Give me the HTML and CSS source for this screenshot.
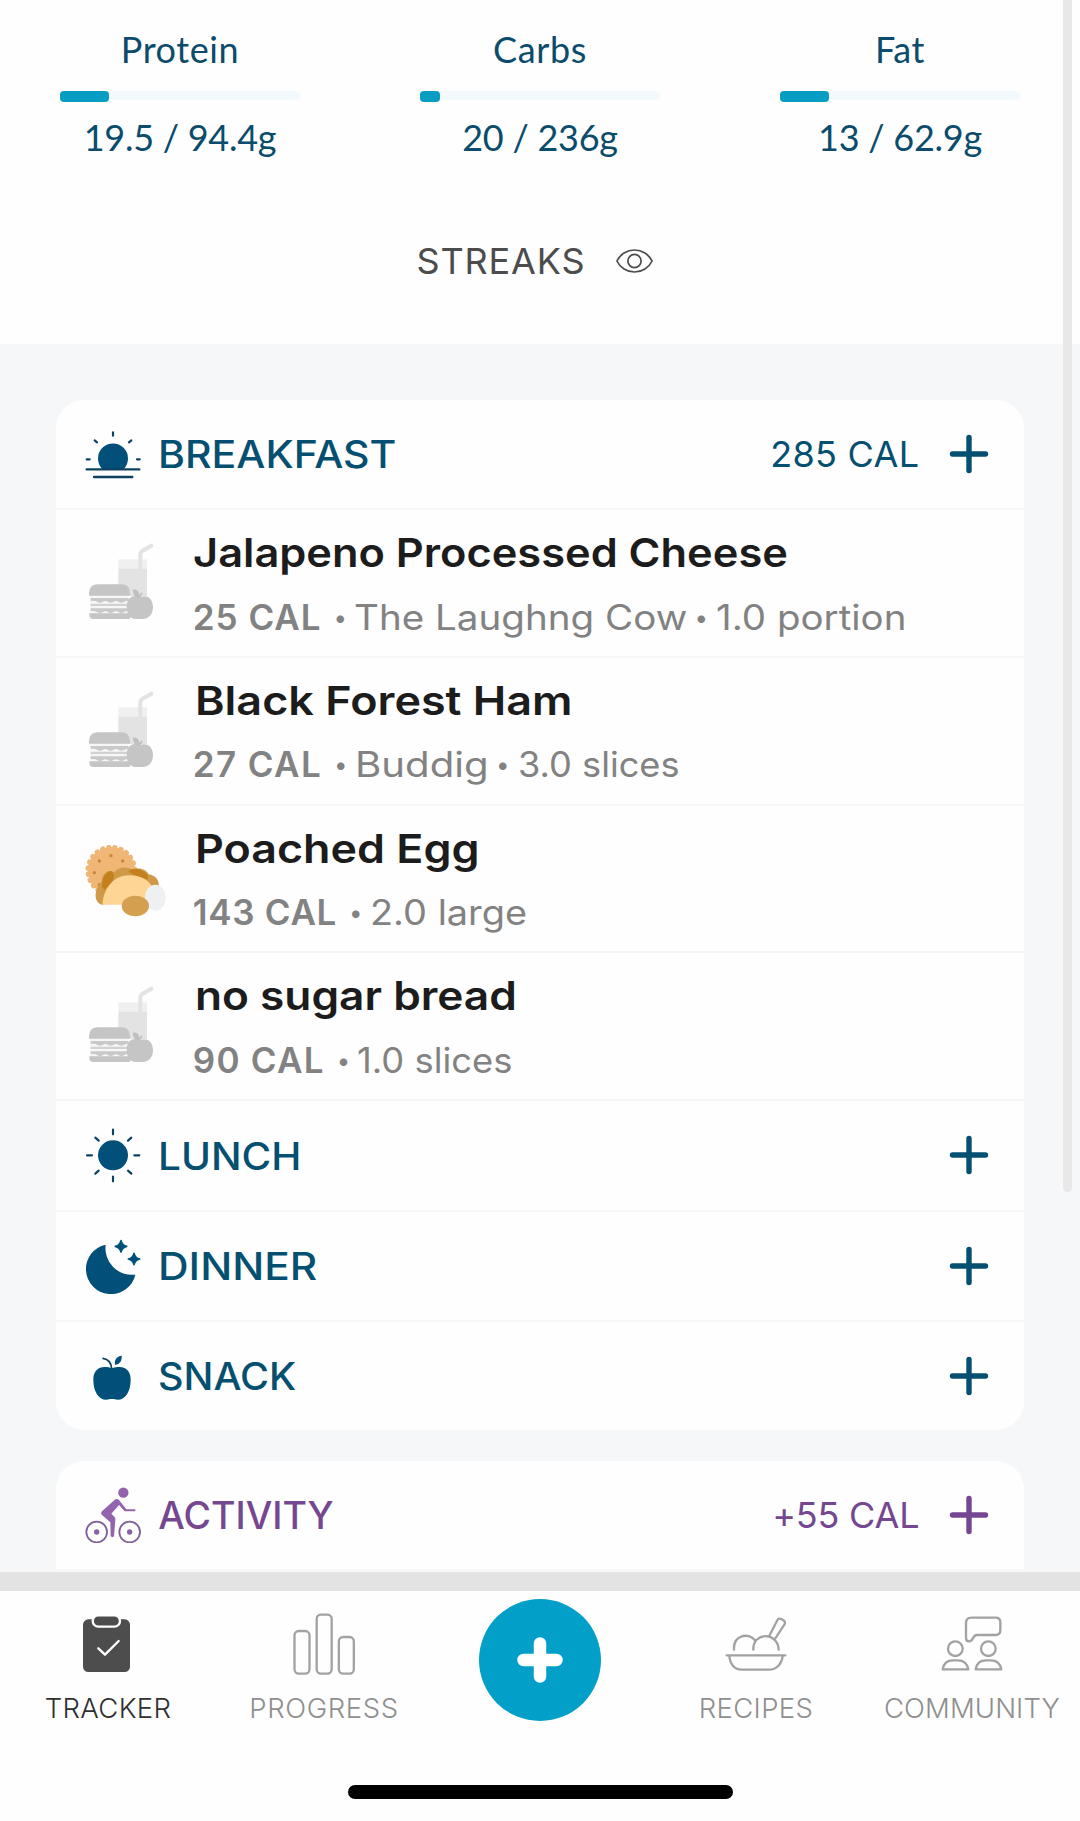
FILE: index.html
```html
<!DOCTYPE html>
<html lang="en">
<head>
<meta charset="utf-8">
<title>Tracker</title>
<link rel="stylesheet" href="styles.css">
</head>
<body>
<svg class="defs" aria-hidden="true">
  <symbol id="plus" viewBox="0 0 40 40"><path d="M20 3.5v33M3.5 20h33" fill="none" stroke="currentColor" stroke-width="5.4" stroke-linecap="round"/></symbol>
  <symbol id="meal" viewBox="0 0 252 252">
    <path fill="#f0f0f0" d="M103 55h86v30h-86z"/>
    <path fill="#e3e3e3" d="M103 83h86v82h-86z"/>
    <path fill="none" stroke="#e3e3e3" stroke-width="12" stroke-linecap="round" d="M169 80V42q0-9 7-13l26-15"/>
    <path fill="#f7f7f7" d="M18 160h116v70H18z"/>
    <path fill="#c5c5c5" d="M15 164v-7q0-27 27-27h69q27 0 27 27v7z"/>
    <path fill="#c9c9c9" d="M20 171h114v8q-9 0-14 4-8 5-16 0-8-6-16 0-8 5-16 0-8-6-16 0-8 5-16 0-8-6-20-3z"/>
    <path fill="#d2d2d2" d="M20 188h114v7H20z"/>
    <path fill="#c9c9c9" d="M20 202h114v8q-9 0-14 4-8 5-16 0-8-6-16 0-8 5-16 0-8-6-16 0-8 5-16 0-8-6-20-3z"/>
    <path fill="#c5c5c5" d="M16 217h122v17H28q-12 0-12-12z"/>
    <path fill="#c5c5c5" d="M168 168c24-8 39 8 39 30 0 24-14 36-32 36h-20c-16 0-27-14-27-36 0-26 16-40 40-30z"/>
    <path fill="#c0c0c0" d="M146 146c13-2 20 5 20 17l6-9 4 4-8 12c-13 1-20-7-22-24z"/>
  </symbol>
</svg>

<div class="screen">
  <main class="content">
    <section class="summary">
      <div class="macros">
        <div class="macro">
          <div class="macro__label">Protein</div>
          <div class="macro__track"><div class="macro__fill" style="width:20.6%"></div></div>
          <div class="macro__value">19.5 / 94.4g</div>
        </div>
        <div class="macro">
          <div class="macro__label">Carbs</div>
          <div class="macro__track"><div class="macro__fill" style="width:8.5%"></div></div>
          <div class="macro__value">20 / 236g</div>
        </div>
        <div class="macro">
          <div class="macro__label">Fat</div>
          <div class="macro__track"><div class="macro__fill" style="width:20.6%"></div></div>
          <div class="macro__value">13 / 62.9g</div>
        </div>
      </div>
      <div class="streaks">
        <span>STREAKS</span>
        <svg class="streaks__eye" viewBox="0 0 37 24" fill="none" stroke="#4c4c4c" stroke-width="1.7"><path d="M.9 12C4 5.500 11 1 18.500 1S33 5.500 36.100 12C33 18.500 26 23 18.500 23S4 18.500 .9 12z"/><circle cx="18.500" cy="12" r="6.600"/></svg>
      </div>
    </section>

    <section class="diary">
      <div class="card">
        <div class="meal meal--first">
          <svg class="meal__icon" viewBox="0 0 168 168">
            <path fill="#02507a" d="M52 129a45 45 0 1 1 64 0z"/>
            <g fill="none" stroke="#0c4260" stroke-linecap="round"><path stroke-width="7" d="M5 130h158M27 153h115"/><path stroke-width="6.500" d="M84 19v10M29 43l7 6M139 43l-7 6M5 100h9M156 100h8"/></g>
          </svg>
          <span class="meal__title meal__title--breakfast">BREAKFAST</span>
          <span class="meal__cal">285 CAL</span>
          <svg class="meal__add"><use href="#plus"/></svg>
        </div>
        <div class="food food--cheese">
          <svg class="food__icon"><use href="#meal"/></svg>
          <div class="food__text">
            <div class="food__name">Jalapeno Processed Cheese</div>
            <div class="food__info"><b class="food__cal">25 CAL</b><i class="dot dot--first">•</i><span class="food__brand">The Laughng Cow</span><i class="dot">•</i><span class="food__qty">1.0 portion</span></div>
          </div>
        </div>
        <div class="food food--ham">
          <svg class="food__icon"><use href="#meal"/></svg>
          <div class="food__text">
            <div class="food__name">Black Forest Ham</div>
            <div class="food__info"><b class="food__cal">27 CAL</b><i class="dot dot--first">•</i><span class="food__brand">Buddig</span><i class="dot">•</i><span class="food__qty">3.0 slices</span></div>
          </div>
        </div>
        <div class="food food--egg">
          <svg class="food__icon" viewBox="0 0 252 252">
            <circle cx="82" cy="101" r="71" fill="#f0b676"/>
            <circle cx="82" cy="101" r="71" fill="none" stroke="#f0b676" stroke-width="13" stroke-linecap="round" stroke-dasharray="3 16"/>
            <g fill="#cb8440"><circle cx="81" cy="56" r="5"/><circle cx="46" cy="72" r="5"/><circle cx="116" cy="72" r="5"/><circle cx="31" cy="107" r="5"/><circle cx="46" cy="143" r="5"/></g>
            <path fill="#cf9a47" d="M54 203C30 196 28 162 52 134c4-24 20-40 38-28 14-18 40-18 54-8 26-8 42 0 50 14 20 4 32 16 30 36l-20 30z"/>
            <path fill="#c47f1e" d="M54 150c0-28 10-46 28-48 10 6 8 22 4 32L62 158zM133 104c8-14 40-12 56 8 4 6 2 14 0 16l-38-14z"/>
            <path fill="#ffd596" d="M55 203c4-52 36-88 80-88 38 0 66 18 72 42l-10 46z"/>
            <ellipse cx="214" cy="182" rx="31" ry="39" fill="#eef0f2"/>
            <ellipse cx="154" cy="207" rx="41" ry="31" fill="#d4a04f"/>
          </svg>
          <div class="food__text">
            <div class="food__name">Poached Egg</div>
            <div class="food__info"><b class="food__cal">143 CAL</b><i class="dot dot--first">•</i><span class="food__qty">2.0 large</span></div>
          </div>
        </div>
        <div class="food food--bread">
          <svg class="food__icon"><use href="#meal"/></svg>
          <div class="food__text">
            <div class="food__name">no sugar bread</div>
            <div class="food__info"><b class="food__cal">90 CAL</b><i class="dot dot--first">•</i><span class="food__qty">1.0 slices</span></div>
          </div>
        </div>
        <div class="meal">
          <svg class="meal__icon" viewBox="0 0 168 168">
            <circle cx="84" cy="85" r="45" fill="#02507a"/>
            <path fill="none" stroke="#0c4260" stroke-width="6.500" stroke-linecap="round" d="M84 8v14M84 149v14M6 85h15M148 85h15M31 32l10 9M139 32l-10 9M31 140l10-9M139 140l-10-9"/>
          </svg>
          <span class="meal__title meal__title--lunch">LUNCH</span>
          <svg class="meal__add"><use href="#plus"/></svg>
        </div>
        <div class="meal">
          <svg class="meal__icon" viewBox="0 0 168 168" fill="#02507a">
            <path d="M62 20A75 75 0 1 0 151 110A80 80 0 0 1 62 20z"/>
            <path stroke="#02507a" stroke-width="5" stroke-linejoin="round" d="M108 8q3 14 17 17-14 3-17 17-3-14-17-17 14-3 17-17zM147 46q3 14 17 17-14 3-17 17-3-14-17-17 14-3 17-17z"/>
          </svg>
          <span class="meal__title meal__title--dinner">DINNER</span>
          <svg class="meal__add"><use href="#plus"/></svg>
        </div>
        <div class="meal meal--last">
          <svg class="meal__icon" viewBox="0 0 168 168" fill="#02507a">
            <path d="M81 61C88 58 94 57 103 57c24 0 34 18 34 38 0 36-16 60-38 60-9 0-11-2-18-2s-9 2-18 2c-22 0-38-24-38-60 0-20 10-38 34-38 9 0 15 1 22 4z"/>
            <path fill="none" stroke="#0c4260" stroke-width="5" stroke-linecap="round" d="M54 31q24 4 26 30"/>
            <path d="M90 50c-3-15 5-25 20-27 1 15-5 26-20 27z"/>
          </svg>
          <span class="meal__title meal__title--snack">SNACK</span>
          <svg class="meal__add"><use href="#plus"/></svg>
        </div>
      </div>

      <div class="card card--activity">
        <div class="meal meal--activity">
          <svg class="meal__icon" viewBox="0 0 168 168">
            <g fill="none" stroke="#80629a" stroke-width="5.500"><circle cx="35" cy="135" r="31"/><circle cx="134" cy="135" r="31"/></g>
            <g fill="#8a5fa6"><circle cx="35" cy="135" r="8"/><circle cx="134" cy="135" r="8"/></g>
            <g fill="#9463ae"><circle cx="115" cy="17" r="15.500"/>
            <path d="M91 37q6-3 11 2l22 28h26q3 3 0 6h-31L102 54 79 80l9 9q4 4 3 10l-4 49q-4 5-10 0l-1-42L51 84q-5-6 0-11z"/></g>
          </svg>
          <span class="meal__title meal__title--activity">ACTIVITY</span>
          <span class="meal__cal meal__cal--activity">+55 CAL</span>
          <svg class="meal__add"><use href="#plus"/></svg>
        </div>
      </div>
    </section>
    <div class="scrollbar"></div>
  </main>

  <nav class="tabs">
    <div class="tab tab--active">
      <svg class="tab__icon" viewBox="0 0 186 186">
        <rect x="18" y="19" width="141" height="158" rx="16" fill="#4d4d4d"/>
        <rect x="47" y="7" width="82" height="34" rx="17" fill="#4d4d4d" stroke="#fff" stroke-width="7"/>
        <path d="M64 106l20 19 41-41" fill="none" stroke="#fff" stroke-width="7" stroke-linecap="round" stroke-linejoin="round"/>
      </svg>
      <span>TRACKER</span>
    </div>
    <div class="tab">
      <svg class="tab__icon tab__icon--line" viewBox="0 0 186 186"><rect x="4.500" y="54" width="45" height="128" rx="13"/><rect x="71" y="5" width="45" height="177" rx="13"/><rect x="137.500" y="72" width="45" height="110" rx="13"/></svg>
      <span class="tab__label--progress">PROGRESS</span>
    </div>
    <div class="tab tab--add">
      <div class="fab"><svg viewBox="0 0 46 46"><path d="M23 6.500v33M6.500 23h33" fill="none" stroke="#fff" stroke-width="12.500" stroke-linecap="round"/></svg></div>
    </div>
    <div class="tab">
      <svg class="tab__icon tab__icon--line" viewBox="0 0 186 186"><path d="M5 127h176M13 129c2 25 16 41 37 41h82c22 0 38-16 41-41M27 110c-3-44 44-53 63-28M85 110c-2-54 74-54 76 0M133 68l24-46q4-8 12-4l6 4q8 5 3 13l-27 41"/></svg>
      <span>RECIPES</span>
    </div>
    <div class="tab">
      <svg class="tab__icon tab__icon--line" viewBox="0 0 186 186"><path d="M91 14h73q14 0 14 14v24q0 14-14 14h-56q-8 0-12 10-4 9-12 9-9 0-9-10V30q0-16 16-16zM5 169q4-27 31-27h14q27 0 32 27zM104 169q4-27 31-27h14q27 0 32 27z"/><circle cx="43" cy="107" r="22"/><circle cx="142" cy="107" r="22"/></svg>
      <span class="tab__label--community">COMMUNITY</span>
    </div>
  </nav>
  <div class="home"><div class="home__bar"></div></div>
</div>
</body>
</html>
```
FILE: styles.css
```css
* { box-sizing: border-box; }

body {
  margin: 0;
  background: #fefefe;
  font-family: Inter, "Liberation Sans", sans-serif;
  color: #054f70;
}

svg { display: block; flex: none; }
.defs { display: none; }

.screen {
  width: 1080px;
  height: 1821px;
  display: flex;
  flex-direction: column;
  overflow: hidden;
}

.content {
  position: relative;
  height: 1572px;
  flex: none;
  overflow: hidden;
}

/* Macros and streaks */
.summary {
  height: 344px;
  padding-top: 29px;
  background: #fefefe;
}

.macros {
  display: grid;
  grid-template-columns: repeat(3, 240px);
  gap: 120px;
  padding: 0 60px;
  font: 400 36px/40px Lato, sans-serif;
  text-align: center;
  color: #0b4c6c;
}

.macro__label { letter-spacing: 0.6px; }

.macro__track {
  height: 9px;
  margin: 22px 0 17px;
  border-radius: 4px;
  background: #f3fafe;
}

.macro__fill {
  height: 11px;
  border-radius: 4px;
  background: #079dc2;
}

.macro__value { letter-spacing: -0.25px; }

.streaks {
  display: flex;
  justify-content: center;
  align-items: center;
  gap: 31px;
  margin-top: 84px;
  padding-right: 10px;
  font-size: 36px;
  line-height: 40px;
  letter-spacing: 0.85px;
  color: #4c4c4c;
}

.streaks__eye { width: 37px; height: 24px; }

/* Diary */
.diary {
  height: 1228px;
  padding: 56px 56px 0;
  background: #f6f7f9;
}

.card {
  height: 1030px;
  border-radius: 28px;
  background: #fefefe;
}

.card--activity {
  height: 108px;
  margin-top: 31px;
  border-radius: 28px 28px 0 0;
}

.meal {
  display: flex;
  align-items: center;
  height: 110.4px;
  padding: 0 34.7px 0 29.3px;
  border-bottom: 2.4px solid #f6f6f7;
}

.meal--last,
.meal--activity { height: 108px; border-bottom: 0; }
.meal--activity { color: #744790; }

.meal__icon { width: 56px; height: 56px; }

.meal__title {
  flex: 1;
  margin-left: 17px;
  padding-top: 2px;
  font-size: 37.5px;
  font-weight: 500;
  transform-origin: left center;
}

.meal__title--breakfast { padding-top: 0; transform: scaleX(1.095); }
.meal__title--lunch { transform: scaleX(1.08); }
.meal__title--dinner { transform: scaleX(1.13); }
.meal__title--snack { transform: scaleX(1.055); }
.meal__title--activity { padding-top: 0; }

.meal__cal {
  margin-right: 30px;
  font-size: 36px;
  letter-spacing: 0.3px;
}

.meal__cal--activity { letter-spacing: -0.2px; }

.meal__add { width: 40px; height: 40px; }

.food {
  display: flex;
  align-items: center;
  height: 147.7px;
  padding-left: 28px;
  border-bottom: 2.4px solid #f6f6f7;
}

.food__icon { width: 84px; height: 84px; }

.food__text {
  align-self: flex-start;
  padding-top: 18px;
  margin-left: 24.8px;
  white-space: nowrap;
}

.food__name {
  margin-left: 2px;
  font-size: 40px;
  font-weight: 600;
  line-height: 50px;
  color: #1c1c1c;
  transform-origin: left center;
}

.food__info {
  display: flex;
  margin-top: 16.3px;
  font-size: 35px;
  line-height: 44px;
  color: #828282;
}

.food__cal { font-weight: 600; }

.food__brand,
.food__qty { transform-origin: left center; }

.dot {
  width: 14px;
  margin: 0 8px 0 6.5px;
  font-size: 24px;
  font-style: normal;
  line-height: 45px;
  display: flex;
  justify-content: center;
}

.dot--first { margin: 0 7px 0 11.7px; }

.food--cheese .food__name { margin-left: 0; transform: scaleX(1.084); }
.food--cheese .food__cal { letter-spacing: 1px; }
.food--cheese .food__brand { margin-right: 31px; transform: scaleX(1.102); }
.food--cheese .food__qty { transform: scaleX(1.1); }
.food--ham .food__name { transform: scaleX(1.123); }
.food--ham .food__cal { letter-spacing: 1.4px; }
.food--ham .food__brand { margin-right: 18px; transform: scaleX(1.148); }
.food--ham .food__qty { transform: scaleX(1.034); }
.food--egg .food__name { transform: scaleX(1.12); }
.food--egg .food__cal { letter-spacing: 0.7px; }
.food--egg .food__qty { transform: scaleX(1.083); }
.food--bread .food__name { transform: scaleX(1.105); }
.food--bread .food__cal { letter-spacing: 1.25px; }
.food--bread .food__qty { transform: scaleX(1.038); }

.scrollbar {
  position: absolute;
  top: 0;
  right: 8px;
  width: 9px;
  height: 1192px;
  border-radius: 0 0 5px 5px;
  background: #e8e8e9;
}

/* Bottom tabs */
.tabs {
  display: grid;
  grid-template-columns: repeat(5, 216px);
  height: 168px;
  flex: none;
  border-top: 19px solid #e3e3e3;
}

.tab {
  display: flex;
  flex-direction: column;
  align-items: center;
  padding-top: 21.5px;
  font-size: 27.5px;
  font-weight: 300;
  line-height: 34px;
  letter-spacing: 0.35px;
  color: #8f8f8f;
}

.tab--active { color: #303030; }
.tab--add { padding-top: 8px; }

.tab__icon { width: 62px; height: 62px; margin-bottom: 16px; }

.tab__icon--line {
  fill: none;
  stroke: #a2a2a2;
  stroke-width: 7;
  stroke-linecap: round;
  stroke-linejoin: round;
}

.tab__label--progress { letter-spacing: 0.6px; }
.tab__label--community { letter-spacing: 0.1px; }

.fab {
  display: flex;
  align-items: center;
  justify-content: center;
  width: 122px;
  height: 122px;
  border-radius: 50%;
  background: #02a0c8;
}

.fab svg { width: 46px; height: 46px; }

.home {
  display: flex;
  justify-content: center;
  padding-top: 45px;
}

.home__bar {
  width: 385px;
  height: 14px;
  border-radius: 7px;
  background: #000;
}
```
